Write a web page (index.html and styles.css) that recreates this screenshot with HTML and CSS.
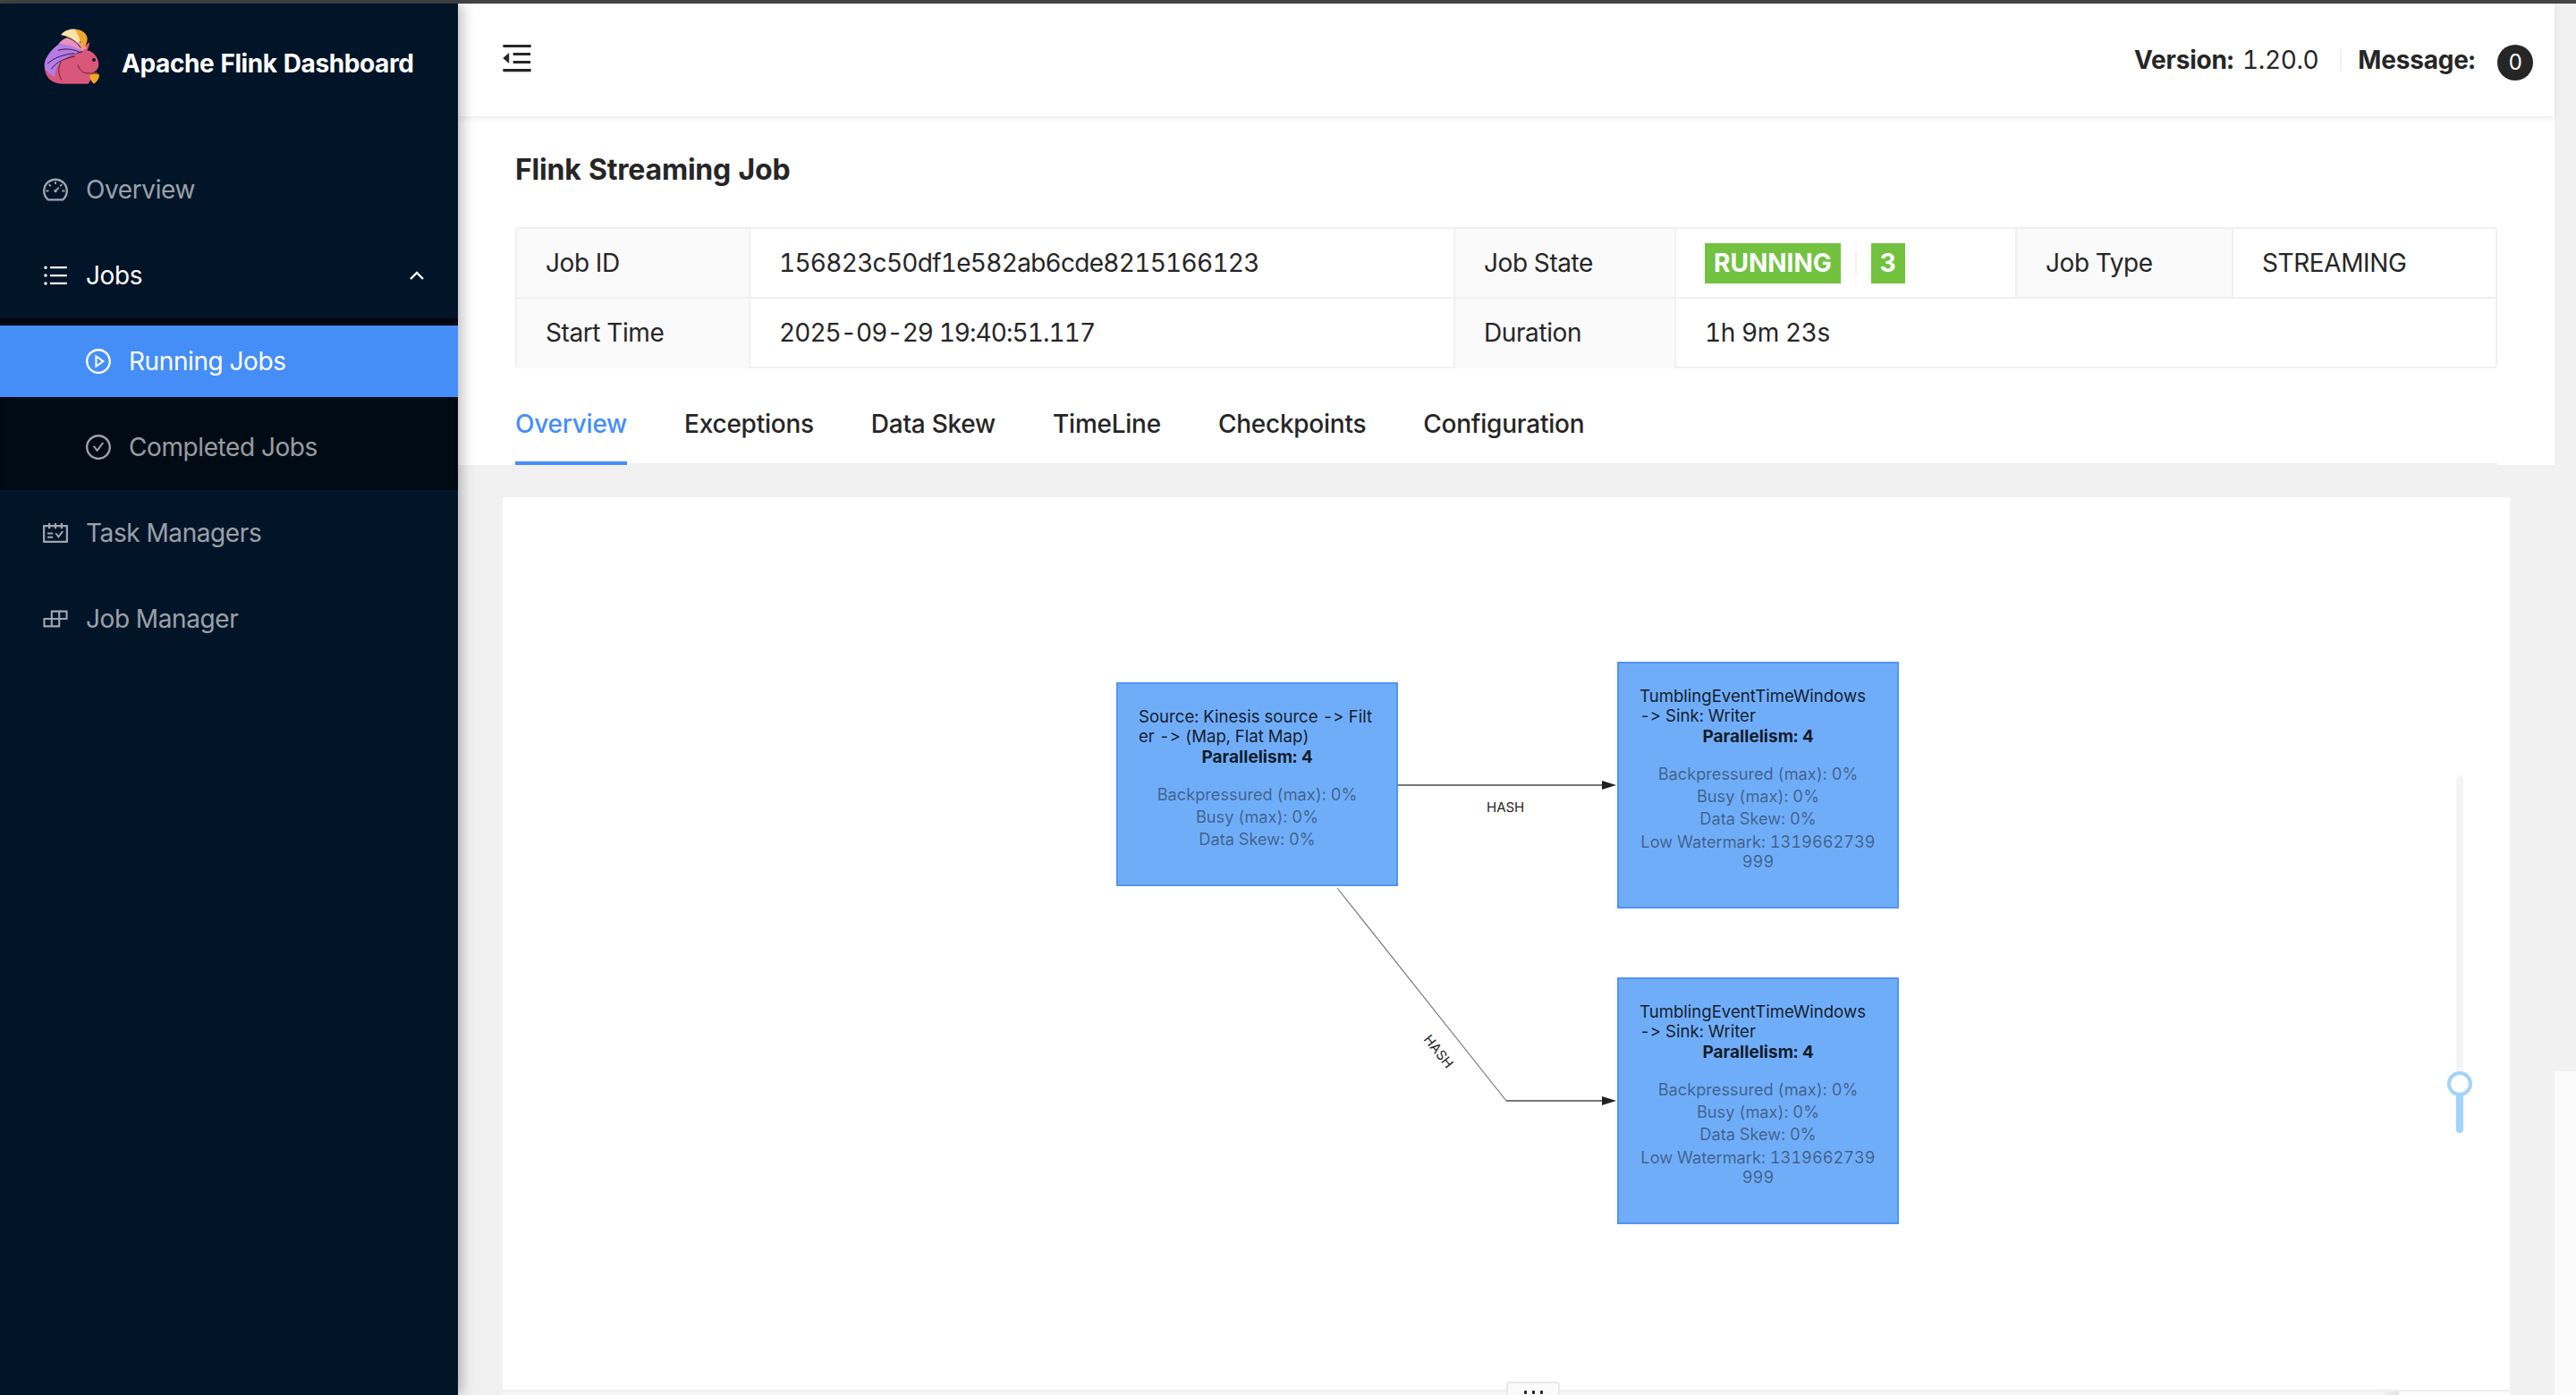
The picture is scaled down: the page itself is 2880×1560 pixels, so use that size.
FILE: index.html
```html
<!DOCTYPE html>
<html lang="en">
<head>
<meta charset="utf-8">
<title>Apache Flink Dashboard</title>
<link rel="stylesheet" href="styles.css">
</head>
<body>
<div class="topline"></div>
<div class="app">
  <aside class="sidebar">
    <div class="brand">
      <svg class="logo" viewBox="148 97 186 186">
        <path fill="#d9577a" d="M150 225C165 205 205 198 240 188C262 178 282 176 292 170L302 172C318 178 332 198 332 216C332 232 322 242 306 246C312 258 304 274 296 282H212C176 282 152 262 150 225Z"/>
        <path fill="#d9577a" d="M268 168L302 142C300 156 296 170 286 180Z"/>
        <path fill="#b57be6" d="M150 215C154 190 176 164 196 150C226 144 262 160 276 172C250 184 224 190 206 208C192 222 184 240 186 258C164 250 148 236 150 215Z"/>
        <path fill="#e892b8" d="M196 150C204 140 214 130 226 128C256 132 280 148 292 162L276 172C256 160 226 148 196 150Z"/>
        <path fill="#fbe3a6" d="M205 118C222 98 250 94 268 104C280 116 276 140 262 146C246 132 226 122 205 118Z"/>
        <path fill="#f0a72e" d="M252 100C274 98 292 112 294 130C294 146 286 158 276 166C272 150 270 124 252 100Z"/>
        <path fill="none" stroke="#35183c" stroke-width="3" d="M160 215C182 194 214 184 250 180M174 232C190 208 220 196 252 190M196 170C220 162 246 166 268 176M230 128C248 134 262 146 272 162"/>
        <path fill="none" stroke="#6b1f3a" stroke-width="3" d="M262 218C268 240 284 250 304 246M206 208C196 226 194 246 208 270"/>
        <circle cx="316" cy="202" r="6" fill="#1d1520"/>
        <path fill="#f5a623" d="M302 252C310 242 328 242 334 252C334 266 324 276 316 282C308 276 302 266 302 252Z"/>
        <path fill="#8a4a20" d="M302 252C310 240 328 240 334 252C324 248 312 248 302 252Z"/>
      </svg>
      <span class="brand-name">Apache Flink Dashboard</span>
    </div>
    <nav class="menu">
      <a class="item">
        <svg class="ico" viewBox="0 0 1024 1024"><path d="M924.8 385.6a446.7 446.7 0 0 0-96-142.4 446.7 446.7 0 0 0-142.4-96C631.1 123.8 572.5 112 512 112s-119.1 11.8-174.4 35.2a446.7 446.7 0 0 0-142.4 96 446.7 446.7 0 0 0-96 142.4C75.8 440.9 64 499.5 64 560c0 132.7 58.3 257.7 159.9 343.1l1.7 1.4c5.8 4.8 13.1 7.5 20.6 7.5h531.7c7.5 0 14.8-2.7 20.6-7.5l1.7-1.4C901.7 817.7 960 692.7 960 560c0-60.5-11.9-119.1-35.2-174.4zM761.4 836H262.6A371.12 371.12 0 0 1 140 560c0-99.4 38.7-192.8 109-263 70.3-70.3 163.7-109 263-109 99.4 0 192.8 38.7 263 109 70.3 70.3 109 163.7 109 263 0 105.6-44.5 205.5-122.6 276z"/><path d="M623.5 421.5a8.03 8.03 0 0 0-11.3 0L527.7 506c-18.7-5-39.4-.2-54.1 14.5a55.95 55.95 0 0 0 0 79.2 55.95 55.95 0 0 0 79.2 0 55.87 55.87 0 0 0 14.5-54.1l84.5-84.5c3.1-3.1 3.1-8.2 0-11.3l-28.3-28.3zM490 320h44c4.4 0 8-3.6 8-8v-80c0-4.4-3.6-8-8-8h-44c-4.4 0-8 3.6-8 8v80c0 4.4 3.6 8 8 8zm260 218v44c0 4.4 3.6 8 8 8h80c4.4 0 8-3.6 8-8v-44c0-4.4-3.6-8-8-8h-80c-4.4 0-8 3.6-8 8zm12.7-197.2l-31.1-31.1a8.03 8.03 0 0 0-11.3 0l-56.6 56.6a8.03 8.03 0 0 0 0 11.3l31.1 31.1c3.1 3.1 8.2 3.1 11.3 0l56.6-56.6c3.1-3.1 3.1-8.2 0-11.3zm-458.6-31.1a8.03 8.03 0 0 0-11.3 0l-31.1 31.1a8.03 8.03 0 0 0 0 11.3l56.6 56.6c3.1 3.1 8.2 3.1 11.3 0l31.1-31.1c3.1-3.1 3.1-8.2 0-11.3l-56.6-56.6zM262 530h-80c-4.4 0-8 3.6-8 8v44c0 4.4 3.6 8 8 8h80c4.4 0 8-3.6 8-8v-44c0-4.4-3.6-8-8-8z"/></svg>
        <span>Overview</span>
      </a>
      <a class="item item-open">
        <svg class="ico" viewBox="0 0 1024 1024"><path d="M912 192H328c-4.4 0-8 3.6-8 8v56c0 4.4 3.6 8 8 8h584c4.4 0 8-3.6 8-8v-56c0-4.4-3.6-8-8-8zm0 284H328c-4.4 0-8 3.6-8 8v56c0 4.4 3.6 8 8 8h584c4.4 0 8-3.6 8-8v-56c0-4.4-3.6-8-8-8zm0 284H328c-4.4 0-8 3.6-8 8v56c0 4.4 3.6 8 8 8h584c4.4 0 8-3.6 8-8v-56c0-4.4-3.6-8-8-8zM104 228a56 56 0 1 0 112 0 56 56 0 1 0-112 0zm0 284a56 56 0 1 0 112 0 56 56 0 1 0-112 0zm0 284a56 56 0 1 0 112 0 56 56 0 1 0-112 0z"/></svg>
        <span>Jobs</span>
        <svg class="chev" viewBox="0 0 16 10"><path d="M1 9L8 2L15 9"/></svg>
      </a>
      <div class="submenu">
        <a class="item sub item-active">
          <svg class="ico" viewBox="0 0 1024 1024"><path d="M512 64C264.6 64 64 264.6 64 512s200.6 448 448 448 448-200.6 448-448S759.4 64 512 64zm0 820c-205.4 0-372-166.6-372-372s166.6-372 372-372 372 166.6 372 372-166.6 372-372 372z"/><path d="M719.4 499.1l-296.1-215A15.9 15.9 0 0 0 398 297v430c0 13.1 14.8 20.5 25.3 12.9l296.1-215a15.83 15.83 0 0 0 0-25.8zm-257.6 134V390.9L628.5 512 461.8 633.1z"/></svg>
          <span>Running Jobs</span>
        </a>
        <a class="item sub">
          <svg class="ico" viewBox="0 0 1024 1024"><path d="M699 353h-46.9c-10.2 0-19.9 4.9-25.9 13.3L469 584.3l-71.2-98.8c-6-8.3-15.6-13.3-25.9-13.3H325c-6.5 0-10.3 7.4-6.5 12.7l124.6 172.8a31.8 31.8 0 0 0 51.7 0l210.6-292c3.9-5.3.1-12.7-6.4-12.7z"/><path d="M512 64C264.6 64 64 264.6 64 512s200.6 448 448 448 448-200.6 448-448S759.4 64 512 64zm0 820c-205.4 0-372-166.6-372-372s166.6-372 372-372 372 166.6 372 372-166.6 372-372 372z"/></svg>
          <span>Completed Jobs</span>
        </a>
      </div>
      <a class="item">
        <svg class="ico" viewBox="0 0 1024 1024"><path d="M928 224H768v-56c0-4.4-3.6-8-8-8h-56c-4.4 0-8 3.6-8 8v56H548v-56c0-4.4-3.6-8-8-8h-56c-4.4 0-8 3.6-8 8v56H328v-56c0-4.4-3.6-8-8-8h-56c-4.4 0-8 3.6-8 8v56H96c-17.7 0-32 14.3-32 32v576c0 17.7 14.3 32 32 32h832c17.7 0 32-14.3 32-32V256c0-17.7-14.3-32-32-32zm-40 568H136V296h120v56c0 4.4 3.6 8 8 8h56c4.4 0 8-3.6 8-8v-56h148v56c0 4.4 3.6 8 8 8h56c4.4 0 8-3.6 8-8v-56h148v56c0 4.4 3.6 8 8 8h56c4.4 0 8-3.6 8-8v-56h120v496zM416 496H232c-4.4 0-8 3.6-8 8v48c0 4.4 3.6 8 8 8h184c4.4 0 8-3.6 8-8v-48c0-4.4-3.6-8-8-8zm0 136H232c-4.4 0-8 3.6-8 8v48c0 4.4 3.6 8 8 8h184c4.4 0 8-3.6 8-8v-48c0-4.4-3.6-8-8-8zm308.2-177.4L620.6 598.3l-52.8-73c-3-4.2-7.8-6.6-12.9-6.6H500c-6.5 0-10.3 7.4-6.5 12.7l114.1 158.2a15.9 15.9 0 0 0 25.8 0l165-228.7c3.8-5.3 0-12.7-6.5-12.7H737c-5 0-9.8 2.4-12.8 6.6z"/></svg>
        <span>Task Managers</span>
      </a>
      <a class="item">
        <svg class="ico" viewBox="0 0 1024 1024"><path d="M916 210H376c-17.7 0-32 14.3-32 32v236H108c-17.7 0-32 14.3-32 32v272c0 17.7 14.3 32 32 32h540c17.7 0 32-14.3 32-32V546h236c17.7 0 32-14.3 32-32V242c0-17.7-14.3-32-32-32zm-504 68h200v200H412V278zm-68 468H144V546h200v200zm268 0H412V546h200v200zm268-268H680V278h200v200z"/></svg>
        <span>Job Manager</span>
      </a>
    </nav>
  </aside>

  <div class="main">
    <header class="header">
      <svg class="fold" viewBox="0 0 1024 1024" preserveAspectRatio="none"><path d="M408 442h480c4.4 0 8-3.6 8-8v-56c0-4.4-3.6-8-8-8H408c-4.4 0-8 3.6-8 8v56c0 4.4 3.6 8 8 8zm-8 204c0 4.4 3.6 8 8 8h480c4.4 0 8-3.6 8-8v-56c0-4.4-3.6-8-8-8H408c-4.4 0-8 3.6-8 8v56zm504-486H120c-4.4 0-8 3.6-8 8v56c0 4.4 3.6 8 8 8h784c4.4 0 8-3.6 8-8v-56c0-4.4-3.6-8-8-8zm0 632H120c-4.4 0-8 3.6-8 8v56c0 4.4 3.6 8 8 8h784c4.4 0 8-3.6 8-8v-56c0-4.4-3.6-8-8-8zM115.4 518.9L271.7 642c5.8 4.6 14.4.5 14.4-6.9V388.9c0-7.4-8.5-11.5-14.4-6.9L115.4 505.1a8.74 8.74 0 0 0 0 13.8z"/></svg>
      <div class="header-right">
        <strong class="hd-key">Version:</strong>
        <span class="hd-val">1.20.0</span>
        <i class="hd-divider"></i>
        <strong class="hd-key">Message:</strong>
        <span class="badge">0</span>
      </div>
    </header>

    <section class="job">
      <h1 class="job-title">Flink Streaming Job</h1>
      <div class="desc">
        <div class="cell label c1">Job ID</div>
        <div class="cell c2 val-id">156823c50df1e582ab6cde8215166123</div>
        <div class="cell label c3">Job State</div>
        <div class="cell c4"><span class="tag">RUNNING</span><i class="tag-divider"></i><span class="tag">3</span></div>
        <div class="cell label c5">Job Type</div>
        <div class="cell c6">STREAMING</div>
        <div class="cell label last-row">Start Time</div>
        <div class="cell last-row val-time">2025-09-29 19:40:51.117</div>
        <div class="cell label last-row">Duration</div>
        <div class="cell last-row span3">1h 9m 23s</div>
      </div>
      <nav class="tabs">
        <a class="tab tab-active">Overview</a>
        <a class="tab">Exceptions</a>
        <a class="tab">Data Skew</a>
        <a class="tab">TimeLine</a>
        <a class="tab">Checkpoints</a>
        <a class="tab">Configuration</a>
      </nav>
    </section>

    <section class="stage">
      <div class="canvas">
        <svg class="edges" viewBox="0 0 2244 1004">
          <path class="edge" d="M1001 322H1232"/>
          <path class="arrow" d="M1229 317L1245 322L1229 327Z"/>
          <path class="edge-thin" d="M933 437L1122 675"/>
          <path class="edge" d="M1122 675H1232"/>
          <path class="arrow" d="M1229 670L1245 675L1229 680Z"/>
        </svg>
        <span class="edge-label el-a">HASH</span>
        <span class="edge-label el-b">HASH</span>

        <div class="node n1">
          <div class="node-title">Source: Kinesis source -&gt; Filt<br>er -&gt; (Map, Flat Map)</div>
          <div class="node-par">Parallelism: 4</div>
          <div class="node-stat">Backpressured (max): 0%</div>
          <div class="node-stat">Busy (max): 0%</div>
          <div class="node-stat">Data Skew: 0%</div>
        </div>
        <div class="node n2">
          <div class="node-title">TumblingEventTimeWindows<br>-&gt; Sink: Writer</div>
          <div class="node-par">Parallelism: 4</div>
          <div class="node-stat">Backpressured (max): 0%</div>
          <div class="node-stat">Busy (max): 0%</div>
          <div class="node-stat">Data Skew: 0%</div>
          <div class="node-stat wm">Low Watermark: 1319662739<br>999</div>
        </div>
        <div class="node n3">
          <div class="node-title">TumblingEventTimeWindows<br>-&gt; Sink: Writer</div>
          <div class="node-par">Parallelism: 4</div>
          <div class="node-stat">Backpressured (max): 0%</div>
          <div class="node-stat">Busy (max): 0%</div>
          <div class="node-stat">Data Skew: 0%</div>
          <div class="node-stat wm">Low Watermark: 1319662739<br>999</div>
        </div>

        <div class="slider">
          <div class="slider-fill"></div>
          <div class="slider-handle"></div>
        </div>

        <div class="panel"></div>
        <div class="panel-handle"><i></i><i></i><i></i></div>
      </div>
    </section>
  </div>

  <div class="rail">
    <div class="rail-top"></div>
    <div class="rail-bottom"></div>
  </div>
</div>
</body>
</html>
```

FILE: styles.css
```css
* { box-sizing: border-box; }
html, body { margin: 0; height: 100%; }
body {
  display: flex;
  flex-direction: column;
  height: 1560px;
  overflow: hidden;
  font-family: Inter, "Liberation Sans", sans-serif;
  font-size: 28px;
  font-feature-settings: "calt" 0, "tnum" 1;
  letter-spacing: -.4px;
  color: #262626;
  background: #f1f1f1;
}
.topline { height: 4px; flex: none; background: #454545; }
.app { flex: 1; display: flex; min-height: 0; }

/* Sidebar */
.sidebar {
  width: 512px;
  flex: none;
  background: #021428;
  box-shadow: 4px 0 14px rgba(0, 0, 0, .28);
  position: relative;
  z-index: 3;
}
.brand { height: 168px; display: flex; padding: 28px 0 0 49px; }
.logo { width: 62px; height: 62px; flex: none; }
.brand-name {
  margin: 19px 0 0 25px;
  color: #fff;
  font-weight: 700;
  font-size: 28px;
  line-height: 40px;
  letter-spacing: -.4px;
  white-space: nowrap;
}
.menu { display: flex; flex-direction: column; }
.item {
  height: 80px;
  margin-bottom: 16px;
  display: flex;
  align-items: center;
  padding-left: 46px;
  color: rgba(255, 255, 255, .62);
  white-space: nowrap;
}
.ico { width: 32px; height: 32px; flex: none; margin-right: 18px; fill: currentColor; }
.item-open { color: #fff; margin-bottom: 8px; position: relative; }
.chev {
  width: 16px; height: 10px;
  margin-left: auto; margin-right: 38px;
  fill: none; stroke: currentColor; stroke-width: 2.4;
}
.submenu {
  background: #000b16;
  padding: 8px 0;
  margin-bottom: 8px;
  box-shadow: inset 0 4px 6px rgba(0, 0, 0, .3);
}
.sub { padding-left: 94px; }
.sub:last-child { margin-bottom: 0; }
.item-active { background: #458ef8; color: #fff; }

/* Main */
.main {
  flex: 1;
  min-width: 0;
  display: flex;
  flex-direction: column;
  background: #f1f1f1;
}
.header {
  height: 126px;
  flex: none;
  background: #fff;
  box-shadow: 0 2px 8px rgba(0, 0, 0, .08);
  display: flex;
  align-items: center;
  padding: 0 24px 0 46px;
  position: relative;
  z-index: 2;
}
.fold { width: 40px; height: 44px; margin-top: -5px; fill: #262626; flex: none; }
.header-right { margin-left: auto; display: flex; align-items: center; white-space: nowrap; margin-top: -1px; }
.hd-key { font-weight: 700; letter-spacing: -.2px; }
.hd-val { margin-left: 10px; font-weight: 400; }
.hd-divider { width: 2px; height: 26px; background: #f0f0f0; margin: 0 18px 0 24px; }
.badge {
  width: 40px; height: 40px;
  margin: 6px 0 0 25px;
  border-radius: 50%;
  background: #262626;
  color: #fff;
  font-size: 24px;
  display: flex;
  align-items: center;
  justify-content: center;
}

.job {
  height: 390px;
  flex: none;
  background: #fff;
  padding: 40px 64px 0;
  display: flex;
  flex-direction: column;
}
.job-title { margin: 0; font-size: 32px; line-height: 40px; font-weight: 700; letter-spacing: -.2px; height: 84px; }
.desc {
  display: grid;
  grid-template-columns: 261px 788px 247px 381px 242px 1fr;
  grid-auto-rows: 78px;
  height: 158px;
  border: 2px solid #f0f0f0;
  border-radius: 4px;
}
.cell {
  display: flex;
  align-items: center;
  padding: 0 32px;
  border-right: 2px solid #f0f0f0;
  border-bottom: 2px solid #f0f0f0;
  white-space: nowrap;
}
.label { background: #fafafa; }
.val-id { letter-spacing: -.72px; }
.val-time { letter-spacing: -.95px; }
.c6, .span3 { border-right: 0; }
.span3 { grid-column: span 3; }
.last-row { border-bottom: 0; padding-bottom: 2px; }
.tag {
  height: 45px;
  padding: 0 10px;
  background: #72c240;
  color: #fff;
  font-weight: 700;
  line-height: 45px;
  letter-spacing: 0;
  display: inline-block;
}
.tag-divider { width: 2px; height: 25px; background: #f0f0f0; margin: 0 16px; flex: none; }
.tabs {
  display: flex;
  gap: 64px;
  margin-top: auto;
  height: 74px;
  box-shadow: inset 0 -2px 0 #f0f0f0;
}
.tab { height: 74px; padding-top: 11px; line-height: 34px; font-weight: 500; letter-spacing: -.25px; white-space: nowrap; }
.tab-active { color: #458ef8; border-bottom: 4px solid #458ef8; }

/* Graph */
.stage { flex: 1; min-height: 0; padding: 36px 50px 0; }
.canvas { position: relative; height: 100%; background: #fff; overflow: hidden; }
.edges { position: absolute; left: 0; top: 0; width: 2244px; height: 1004px; }
.edge { fill: none; stroke: #777; stroke-width: 2; }
.edge-thin { fill: none; stroke: #777; stroke-width: 1.2; }
.arrow { fill: #222; }
.edge-label {
  position: absolute;
  font-size: 15px;
  line-height: 18px;
  letter-spacing: 0;
  color: #262626;
  white-space: nowrap;
}
.el-a { left: 1100px; top: 338px; }
.el-b { left: 1025px; top: 611px; transform: rotate(51.5deg); }
.node {
  position: absolute;
  width: 315px;
  padding: 25px 23px 0;
  background: #70adf8;
  border: 2px solid #4f94f8;
  font-size: 18px;
  letter-spacing: 0;
  text-align: center;
  white-space: nowrap;
}
.n1 { left: 686px; top: 207px; height: 228px; }
.n2 { left: 1246px; top: 184px; height: 276px; }
.n3 { left: 1246px; top: 537px; height: 276px; }
.node-title { text-align: left; font-size: 18.6px; line-height: 22px; color: rgba(0, 0, 0, .85); }
.node-par { font-size: 19px; font-weight: 700; line-height: 24px; margin: 1px 0 17px; color: rgba(0, 0, 0, .85); }
.node-stat { font-size: 18.2px; line-height: 25px; color: rgba(0, 0, 0, .45); }
.wm { line-height: 22px; padding-top: 2px; }
.slider {
  position: absolute;
  left: 2184px;
  top: 311px;
  width: 8px;
  height: 400px;
  background: #f5f5f5;
  border-radius: 4px;
}
.slider-fill {
  position: absolute;
  left: 0; right: 0; bottom: 0;
  height: 60px;
  background: #a3d3fb;
  border-radius: 0 0 4px 4px;
}
.slider-handle {
  position: absolute;
  left: -10px;
  top: 331px;
  width: 28px;
  height: 28px;
  background: #fff;
  border: 4px solid #a3d3fb;
  border-radius: 50%;
}
.panel {
  position: absolute;
  left: 0; right: 0; bottom: 0;
  height: 6px;
  border-top: 2px solid #efefef;
  background: linear-gradient(to right, #f6f6f6 2099px, #e2e2e2 2120px, #fbfbfb 2120px);
}
.panel-handle {
  position: absolute;
  left: 1122px;
  bottom: 0;
  width: 60px;
  height: 15px;
  padding-top: 8px;
  display: flex;
  justify-content: center;
  gap: 6px;
  background: #fafafa;
  border: 2px solid #e8e8e8;
  border-bottom: 0;
  border-radius: 4px 4px 0 0;
}
.panel-handle i { width: 3px; height: 4px; background: #262626; border-radius: 1px; }

.rail { width: 24px; flex: none; display: flex; flex-direction: column; }
.rail-top { height: 1194px; background: #f1f1f1; }
.rail-bottom { flex: 1; background: #fbfbfb; }
```
